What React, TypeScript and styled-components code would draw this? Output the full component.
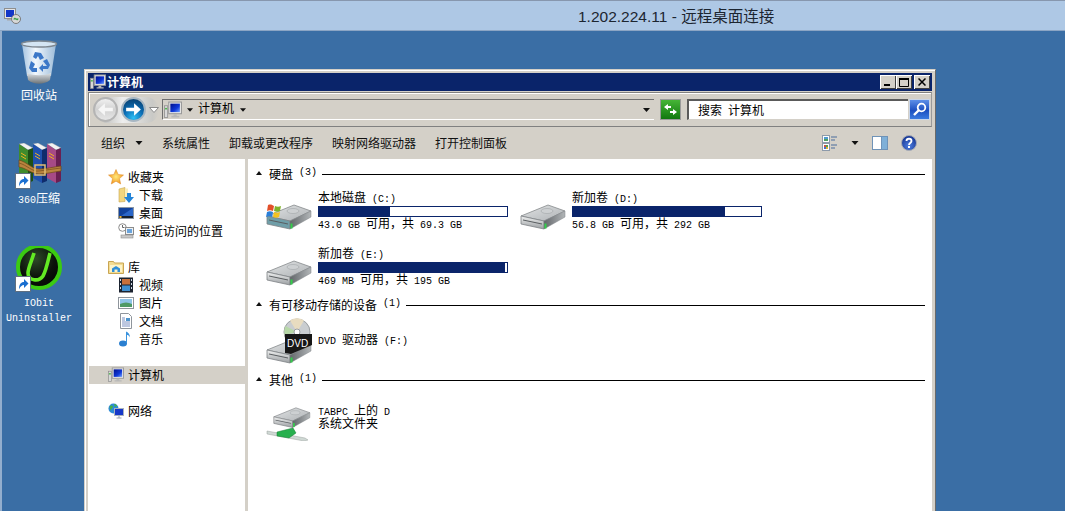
import React from 'react'
import styled, { createGlobalStyle } from 'styled-components'

const GlobalStyle = createGlobalStyle`
  html, body { margin: 0; padding: 0; height: 511px; overflow: hidden; background: #3a6ea5; }
  body { font-family: "Noto Sans CJK SC", "Liberation Sans", sans-serif; font-size: 12px; color: #000; }
  * { box-sizing: border-box; }
`

const Page = styled.div`
  height: 511px;
  display: flex;
  flex-direction: column;
  overflow: hidden;
`

const RemoteBar = styled.header`
  height: 31px;
  flex: none;
  display: flex;
  align-items: center;
  padding-left: 4px;
  background: #aec8e5;
  border-top: 1px solid #8797ae;
  border-bottom: 1px solid #8ba5c4;
`

const RemoteTitle = styled.div`
  margin-left: 557px;
  margin-top: -2px;
  font-family: "Liberation Sans", "Noto Sans CJK SC", sans-serif;
  font-size: 15.5px;
  color: #1c2530;
  white-space: nowrap;
`

const Desktop = styled.main`
  position: relative;
  flex: 1;
  min-height: 0;
  background: #3a6ea5;
  border-left: 2px solid #93aecd;
`

const IconColumn = styled.div`
  width: 74px;
  padding-top: 9px;
  display: grid;
  grid-auto-rows: 103px;
`

const Tile = styled.div`
  display: flex;
  flex-direction: column;
  align-items: center;
`

const IconSlot = styled.div`
  position: relative;
  width: 48px;
  height: 48px;
`

const ShortcutBadge = styled.span`
  position: absolute;
  left: 0;
  bottom: 2px;
  width: 16px;
  height: 16px;
  display: block;
`

const TileLabel = styled.div`
  color: #fff;
  text-align: center;
  line-height: 13px;
  white-space: nowrap;
`

const Mono = styled.span`
  font-family: "Liberation Mono", monospace;
  font-size: 10px;
  line-height: 1;
  white-space: pre;
`

const ExplorerWindow = styled.section`
  position: absolute;
  left: 82px;
  top: 38px;
  width: 852px;
  height: 445px;
  padding: 3px 3px 0 3px;
  display: flex;
  flex-direction: column;
  background: #d4d0c8;
  border-top: 1px solid #d4d0c8;
  border-left: 1px solid #d4d0c8;
  border-right: 1px solid #6a6a6a;
  box-shadow: inset 1px 1px 0 #fff;
`

const TitleBar = styled.div`
  height: 18px;
  flex: none;
  display: flex;
  align-items: center;
  padding: 0 2px;
  background: #0a246a;
  color: #fff;
  font-weight: 700;
`

const TitleText = styled.span`
  flex: 1;
  margin-left: 1px;
  line-height: 18px;
`

const CaptionButton = styled.button<{ $gap?: number }>`
  width: 16px;
  height: 14px;
  padding: 0;
  margin-left: ${p => p.$gap ?? 0}px;
  border: 0;
  display: flex;
  align-items: center;
  justify-content: center;
  background: #d4d0c8;
  box-shadow: inset 1px 1px 0 #fff, inset -1px -1px 0 #404040;
`

const NavFrame = styled.div`
  height: 35px;
  margin-top: 1px;
  flex: none;
  display: flex;
  align-items: center;
  padding: 0 1px 0 4px;
  border: 1px solid #808080;
  border-right-color: #9a9a9a;
  box-shadow: inset 1px 1px 0 #fff;
`

const NavCapsule = styled.div`
  width: 66px;
  height: 26px;
  flex: none;
  display: flex;
  align-items: center;
  gap: 3px;
  margin-right: 3px;
  border-radius: 13px;
  background: linear-gradient(90deg, transparent 10px, #c4c4c2 12px, #eeeeee 45%, #c9c9c6 90%, transparent);
`

const RoundButton = styled.span<{ $active?: boolean }>`
  width: 25px;
  height: 25px;
  border-radius: 50%;
  flex: none;
  display: flex;
  align-items: center;
  justify-content: center;
  border: 2px solid ${p => (p.$active ? '#a7b6c2' : '#b4b4b4')};
  background: ${p =>
    p.$active
      ? 'radial-gradient(circle at 50% 90%, #2fc0f5 0%, #0b6cb4 45%, #063560 100%)'
      : 'linear-gradient(#f0f0f0, #d2d2d2 50%, #e6e6e6)'};
`

const HistoryChevron = styled.span`
  display: flex;
`

const AddressBox = styled.div`
  flex: 1;
  height: 21px;
  display: flex;
  align-items: center;
  padding: 0 4px 0 1px;
  border-top: 1px solid #6f6f6f;
  border-left: 1px solid #6f6f6f;
  border-bottom: 1px solid #fff;
`

const AddressCaret = styled.span`
  margin-left: 5px;
  display: flex;
`

const AddressLabel = styled.span`
  margin: 0 6px 3px 5px;
  line-height: 16px;
`

const Spacer = styled.span`
  flex: 1;
`

const RefreshButton = styled.span`
  width: 21px;
  height: 21px;
  margin: 0 6px;
  flex: none;
  display: flex;
  align-items: center;
  justify-content: center;
  background: linear-gradient(#46b536, #11780f);
  border: 1px solid #e7e4dd;
  outline: 1px solid #9a9a9a;
  outline-offset: -1px;
`

const SearchBox = styled.div`
  width: 221px;
  height: 21px;
  flex: none;
  margin-right: 1px;
  padding-left: 9px;
  line-height: 17px;
  background: #fff;
  border-top: 2px solid #5a5a5a;
  border-left: 2px solid #5a5a5a;
  border-bottom: 1px solid #d4d0c8;
`

const SearchButton = styled.span`
  width: 21px;
  height: 21px;
  flex: none;
  display: flex;
  align-items: center;
  justify-content: center;
  background: linear-gradient(#5d8fe8, #1c4fc0 55%, #3a7ae0);
  border: 1px solid #c9d5e8;
`

const Toolbar = styled.div`
  height: 32px;
  flex: none;
  display: flex;
  align-items: center;
  gap: 19px;
  padding: 0 15px 0 13px;
`

const ToolItem = styled.span`
  display: flex;
  align-items: center;
  gap: 10px;
  line-height: 18px;
  color: #111;
`

const ToolIcons = styled.div`
  margin-left: auto;
  display: flex;
  align-items: center;
  gap: 13px;
`

const Panes = styled.div`
  flex: 1;
  min-height: 0;
  display: grid;
  grid-template-columns: 157px 3px 1fr;
  background: #fff;
`

const Gutter = styled.div`
  background: #d4d0c8;
`

const NavPane = styled.nav`
  padding: 9px 0 0 1px;
  display: grid;
  grid-auto-rows: 18px;
`

const NavRow = styled.div<{ $child?: boolean; $selected?: boolean }>`
  display: flex;
  align-items: center;
  gap: ${p => (p.$child ? 5 : 4)}px;
  padding-left: ${p => (p.$child ? 29 : 19)}px;
  line-height: 18px;
  background: ${p => (p.$selected ? '#d4d0c8' : 'transparent')};
`

const ContentPane = styled.div`
  padding: 6px 7px 0 8px;
`

const GroupHeader = styled.div<{ $top: number }>`
  display: flex;
  align-items: center;
  height: 16px;
  margin-top: ${p => p.$top}px;
`

const Collapse = styled.span`
  width: 0;
  height: 0;
  margin-right: 7px;
  border-left: 3.5px solid transparent;
  border-right: 3.5px solid transparent;
  border-bottom: 4px solid #111;
`

const GroupRule = styled.span`
  flex: 1;
  height: 1px;
  margin: 3px 0 0 5px;
  background: #000;
`

const TileGrid = styled.div<{ $top: number }>`
  display: grid;
  grid-template-columns: 254px 254px;
  row-gap: 12px;
  margin: ${p => p.$top}px 0 0 10px;
`

const Drive = styled.div`
  display: flex;
  align-items: center;
  gap: 6px;
  height: 44px;
`

const DriveIcon = styled.span<{ $lift?: number }>`
  width: 46px;
  height: 48px;
  flex: none;
  display: flex;
  align-items: flex-end;
  justify-content: center;
  padding-bottom: ${p => p.$lift ?? 0}px;
`

const DriveInfo = styled.div`
  width: 190px;
  margin-bottom: 1px;
`

const DriveLine = styled.div`
  height: 13px;
  line-height: 11px;
  white-space: nowrap;
`

const DriveBar = styled.div`
  height: 11px;
  margin-top: 2px;
  border: 1px solid #0a246a;
  background: #fff;
`

const DriveFill = styled.div`
  height: 100%;
  background: #0a246a;
`

const ComputerIcon = ({ size = 16 }: { size?: number }) => (
  <svg width={size} height={size} viewBox="0 0 17 16">
    <defs>
      <linearGradient id="scr" x1="0" y1="0" x2="1" y2="1">
        <stop offset="0" stopColor="#00108c" />
        <stop offset="0.6" stopColor="#1038d8" />
        <stop offset="1" stopColor="#6fa0ff" />
      </linearGradient>
    </defs>
    <rect x="0.5" y="4" width="3" height="11" fill="#d9d9d9" stroke="#8a8a8a" strokeWidth="0.7" />
    <rect x="1" y="6" width="2" height="1.5" fill="#4fb84f" />
    <rect x="4.5" y="0.5" width="12" height="11" fill="#e8e8e8" stroke="#9a9a9a" />
    <rect x="6" y="2" width="9" height="8" fill="url(#scr)" />
    <path d="M9 12h3v1.5h2.5V15H7v-1.5h2z" fill="#b8b8b8" />
  </svg>
)

const RemoteGlyph = () => (
  <svg width="17" height="17" viewBox="0 0 17 17">
    <rect x="0.5" y="1.5" width="11" height="10" fill="#e4e4e4" stroke="#8f8f8f" />
    <rect x="2" y="3" width="8" height="7" fill="#1236c8" />
    <path d="M3 12h7v1.500H3z" fill="#a8a8a8" />
    <circle cx="12" cy="12" r="4.500" fill="#d8d8d8" stroke="#7a7a7a" />
    <path d="M9.500 12h2l-1-1.200M14.500 12h-2l1 1.200" fill="none" stroke="#2c9a3a" strokeWidth="1.200" />
  </svg>
)

const TriangleDown = ({ color = '#111', w = 7 }: { color?: string; w?: number }) => (
  <svg width={w} height="4" viewBox="0 0 7 4">
    <path d="M0 0h7L3.5 4z" fill={color} />
  </svg>
)

const ShortcutArrow = () => (
  <svg width="16" height="16" viewBox="0 0 16 16">
    <rect x="0.5" y="0.5" width="15" height="15" fill="#fff" stroke="#5f6f80" />
    <path d="M4 13.500c0-5.500 2-7.500 5-7.500V3L13.500 7.500 9 12V9c-2 0-4 1.500-5 4.500z" fill="#1a6fd0" />
  </svg>
)

const RecycleBin = () => (
  <svg width="48" height="48" viewBox="0 0 48 48">
    <defs>
      <linearGradient id="bin" x1="0" y1="0" x2="1" y2="0">
        <stop offset="0" stopColor="#a6c4e0" />
        <stop offset="0.4" stopColor="#f2f8fd" />
        <stop offset="1" stopColor="#9dbcd9" />
      </linearGradient>
      <linearGradient id="binBase" x1="0" y1="0" x2="0" y2="1">
        <stop offset="0" stopColor="#dfe3e6" />
        <stop offset="1" stopColor="#6b7277" />
      </linearGradient>
    </defs>
    <path d="M7 4l5 32h24l5-32z" fill="url(#bin)" />
    <path d="M12 33c7 3 17 3 24 0l-1 7c-6 5-16 5-22 0z" fill="url(#binBase)" />
    <ellipse cx="24" cy="4" rx="17.5" ry="3" fill="#d4e5f3" stroke="#7d8790" strokeWidth="1.400" />
    <g fill="#3c78c8">
      <path d="M20 12l6 1 3 5-4 2-2-4-2 3-3-2z" />
      <path d="M28 21l4-2 3 6-2 4h-5v3l-4-4 4-4v2h4z" />
      <path d="M16 21l4 3-2 4h4v4h-5l-3-4z" />
    </g>
  </svg>
)

const Book = ({ x, color, dark }: { x: number; color: string; dark: string }) => (
  <g>
    <path d={`M${x} 1l5-1 9 5-5 2z`} fill="#f2f2f2" stroke="#9c9c9c" strokeWidth="0.4" />
    <path d={`M${x} 1l9 6v33l-9-5z`} fill={color} />
    <path d={`M${x + 9} 7l5-2v33l-5 2z`} fill={dark} />
    <path d={`M${x + 2} 10l5 3M${x + 2} 13l5 3`} stroke="#f2b21e" strokeWidth="1" />
  </g>
)

const ArchiveBooks = () => (
  <svg width="48" height="48" viewBox="0 0 48 48">
    <Book x={32} color="#a64a86" dark="#6a1f52" />
    <Book x={18} color="#1f50ac" dark="#102c6c" />
    <Book x={4} color="#3f8b2d" dark="#1e5016" />
    <path d="M4 17c8 2 13 9 20 9s14-2 22-3v5c-8 1-15 3-22 3S11 25 4 24z" fill="#b9843e" stroke="#6d4619" strokeWidth="0.7" />
    <path d="M4 20c8 2 13 9 20 8s14-2 22-3" fill="none" stroke="#7c521f" strokeWidth="0.8" />
    <rect x="20" y="22" width="10" height="10" fill="none" stroke="#e0bc72" strokeWidth="1.500" />
  </svg>
)

const UninstallerLogo = () => (
  <svg width="48" height="48" viewBox="0 0 48 48">
    <defs>
      <radialGradient id="uBg" cx="0.42" cy="0.3" r="0.75">
        <stop offset="0" stopColor="#2e4a28" />
        <stop offset="0.6" stopColor="#0b120a" />
        <stop offset="1" stopColor="#040604" />
      </radialGradient>
    </defs>
    <circle cx="24" cy="21" r="21" fill="url(#uBg)" stroke="#3bcb12" strokeWidth="4" />
    <path d="M19 7c-2 7-6 15-6 20 0 8 11 9 15 3 3-5 5-15 7-23" fill="none" stroke="#63ea23" strokeWidth="3.600" />
  </svg>
)

const Star = () => (
  <svg width="16" height="16" viewBox="0 0 16 16">
    <defs>
      <radialGradient id="star" cx="0.5" cy="0.5" r="0.6">
        <stop offset="0" stopColor="#ffe87a" />
        <stop offset="1" stopColor="#f08a12" />
      </radialGradient>
    </defs>
    <path d="M8 0.5l2.2 5 5.3.5-4 3.6 1.2 5.4L8 12.2 3.3 15l1.2-5.400-4-3.600 5.300-.5z" fill="url(#star)" stroke="#dd8a2a" strokeWidth="0.5" />
  </svg>
)

const DownloadFolder = () => (
  <svg width="16" height="16" viewBox="0 0 16 16">
    <path d="M1 2l6-1.500v14L1 15z" fill="#f2d67e" stroke="#c7a650" strokeWidth="0.6" />
    <path d="M7 1.500h3v10H7z" fill="#fbeeb8" />
    <path d="M9 6h4v4h3l-5 6-5-6h3z" fill="#2384d8" />
  </svg>
)

const DesktopGlyph = () => (
  <svg width="16" height="16" viewBox="0 0 16 16">
    <rect x="0.500" y="2.500" width="15" height="11" fill="#2a66c8" stroke="#8b97a6" />
    <path d="M1 3h14L3 11H1z" fill="#11429c" />
    <rect x="1" y="11" width="14" height="2" fill="#17202c" />
    <rect x="1.500" y="11" width="2" height="2" fill="#e8b23a" />
  </svg>
)

const RecentGlyph = () => (
  <svg width="16" height="16" viewBox="0 0 16 16">
    <circle cx="4.500" cy="4.500" r="3.800" fill="#fff" stroke="#8c8c8c" />
    <path d="M4.500 2v2.500h2" stroke="#666" fill="none" />
    <rect x="7.500" y="4.500" width="8" height="7" fill="#eef1f4" stroke="#8c8c8c" />
    <rect x="9" y="6" width="5" height="4" fill="#6aa4dc" />
    <rect x="3" y="12" width="12" height="3" fill="#c9c9c9" stroke="#8c8c8c" strokeWidth="0.6" />
  </svg>
)

const LibraryFolder = () => (
  <svg width="16" height="16" viewBox="0 0 16 16">
    <path d="M0.500 2.500h5l1 1.500h9v10.500H.5z" fill="#f3dc93" stroke="#c9a552" />
    <path d="M2 6h12v7H2z" fill="#fdf3c8" />
    <path d="M4 13V9.500L8 7l4 2.500V13z" fill="#2f8ed8" />
    <rect x="6.500" y="10.500" width="3" height="2.500" fill="#fdf3c8" />
  </svg>
)

const FilmGlyph = () => (
  <svg width="16" height="16" viewBox="0 0 16 16">
    <rect x="1" y="0.500" width="14" height="15" fill="#1b2330" />
    <rect x="4" y="2" width="8" height="5.500" fill="#c8703a" />
    <rect x="4" y="8.500" width="8" height="5.500" fill="#3f8fd0" />
    <path d="M2 2h1v2H2zM2 6h1v2H2zM2 10h1v2H2zM13 2h1v2h-1zM13 6h1v2h-1zM13 10h1v2h-1z" fill="#cfd8e4" />
  </svg>
)

const PictureGlyph = () => (
  <svg width="16" height="16" viewBox="0 0 16 16">
    <rect x="0.500" y="2.500" width="15" height="11" fill="#fff" stroke="#8f959c" />
    <rect x="2" y="4" width="12" height="8" fill="#8fc4e8" />
    <path d="M2 9c4-2 8-2 12 0v3H2z" fill="#4f9a66" />
  </svg>
)

const DocGlyph = () => (
  <svg width="16" height="16" viewBox="0 0 16 16">
    <path d="M2.500 .5h8l3 3v12h-11z" fill="#fff" stroke="#8f959c" />
    <path d="M4 5h3M4 7h3M4 9h8M4 11h8M4 13h8" stroke="#7b8fc0" />
    <rect x="8" y="5" width="4" height="3" fill="#4d94cc" />
  </svg>
)

const MusicGlyph = () => (
  <svg width="16" height="16" viewBox="0 0 16 16">
    <ellipse cx="5" cy="12.500" rx="4" ry="3" fill="#2a7fd0" />
    <path d="M8 12V.5c2 1 4 2.500 4 6-1-2-2-2.500-3-2.500v8z" fill="#3a93de" />
  </svg>
)

const NetworkGlyph = () => (
  <svg width="16" height="16" viewBox="0 0 16 16">
    <circle cx="5.500" cy="5.500" r="5" fill="#2c8ad8" />
    <path d="M2 3c2-1 3 0 3 1s-2 1-2 3-2-2-1-4zM6 1c2 0 3 1 3 2L7 4z" fill="#44b048" />
    <rect x="6.500" y="5.500" width="9" height="7" fill="#1638c8" stroke="#a9b2bd" />
    <path d="M10.500 13h1v1.500h2v1h-5v-1h2z" fill="#9aa2aa" />
  </svg>
)

const DriveBody = ({ tint = false }: { tint?: boolean }) => (
  <g strokeLinejoin="round">
    <defs>
      <linearGradient id="dTop" x1="0" y1="0" x2="1" y2="1">
        <stop offset="0" stopColor="#e2e4e5" />
        <stop offset="1" stopColor="#aeb2b5" />
      </linearGradient>
      <linearGradient id="dSide" x1="0" y1="0" x2="1" y2="0">
        <stop offset="0" stopColor="#62666a" />
        <stop offset="1" stopColor="#b2b6b8" />
      </linearGradient>
      <linearGradient id="dFront" x1="0" y1="0" x2="0" y2="1">
        <stop offset="0" stopColor="#f0f1f1" />
        <stop offset="1" stopColor="#9a9ea1" />
      </linearGradient>
    </defs>
    <path d="M1 12L28 1l17 6-21 10z" fill="url(#dTop)" stroke="#85898c" strokeWidth="0.8" />
    <ellipse cx="27" cy="7" rx="6" ry="2.500" fill="#cdd0d2" stroke="#9a9ea1" strokeWidth="0.5" />
    <path d="M1 12l23 5v8L1 20z" fill={tint ? '#6f9ea8' : 'url(#dFront)'} stroke="#7f8386" strokeWidth="0.8" />
    <path d="M3 15.500l19 4v1L3 16.500z" fill="#5a5e61" />
    <path d="M24 17l21-10v6L24 25z" fill="url(#dSide)" stroke="#7f8386" strokeWidth="0.5" />
    <rect x="24.500" y="19.500" width="2" height="5" fill="#32d04a" />
  </g>
)

const HardDrive = () => (
  <svg width="46" height="26" viewBox="0 0 46 26">
    <DriveBody />
  </svg>
)

const SystemDrive = () => (
  <svg width="46" height="26" viewBox="0 0 46 26">
    <DriveBody tint />
    <path d="M2 1c3-1 4 0 6 1l-1 5c-2-1-4-1-6 0z" fill="#e2502a" />
    <path d="M9 2c2 1 4 1 6 0l-1 5c-2 1-4 1-6 0z" fill="#7fb32a" />
    <path d="M1 8c2-1 4-1 6 0l-1 5c-2-1-4-1-6 0z" fill="#2a7fd8" />
    <path d="M8 8c2 1 4 1 6 0l-1 5c-2 1-4 1-6 0z" fill="#f2c21f" />
  </svg>
)

const DvdDrive = () => (
  <svg width="46" height="46" viewBox="0 0 46 46">
    <circle cx="31" cy="14" r="13" fill="#c9cdd0" stroke="#9a9ea1" />
    <path d="M31 14L24 2.500a13 13 0 0 1 14 0z" fill="#e8dcc0" />
    <path d="M31 14L18.500 17a13 13 0 0 1 1-9z" fill="#b7d8a8" />
    <circle cx="31" cy="14" r="3" fill="#fff" stroke="#9a9ea1" />
    <g transform="translate(0 20)">
      <DriveBody />
    </g>
    <path d="M19 16h27v11l-21 9-6-1z" fill="#171717" />
    <text x="21" y="29" fontFamily="Liberation Sans, sans-serif" fontSize="10" fill="#fff">DVD</text>
  </svg>
)

const NetDrive = () => (
  <svg width="46" height="34" viewBox="0 0 46 34">
    <g transform="translate(7 0) scale(0.82)">
      <DriveBody />
    </g>
    <path d="M1 24l38 7 3 2-4 1L1 27z" fill="#cfd8d4" stroke="#9aa39e" strokeWidth="0.5" />
    <path d="M11 25l16-4 3 5-7 5-12-2z" fill="#27b04e" stroke="#147a30" strokeWidth="0.5" />
  </svg>
)

const ViewsGlyph = () => (
  <svg width="16" height="16" viewBox="0 0 16 16">
    <rect x="0.500" y="0.500" width="7" height="7" fill="#fff" stroke="#8d9aaa" />
    <rect x="2" y="2" width="4" height="2" fill="#4f9ad0" />
    <rect x="2" y="4" width="4" height="2" fill="#4fa060" />
    <rect x="0.500" y="8.500" width="7" height="7" fill="#fff" stroke="#8d9aaa" />
    <rect x="2" y="10" width="2" height="2" fill="#d05040" />
    <rect x="4" y="10" width="2" height="2" fill="#50a050" />
    <rect x="2" y="12" width="2" height="2" fill="#4070d0" />
    <rect x="4" y="12" width="2" height="2" fill="#e0b030" />
    <path d="M9 2h6M9 5h4M9 10h6M9 13h4" stroke="#4a6d9c" />
  </svg>
)

const PaneGlyph = () => (
  <svg width="16" height="14" viewBox="0 0 16 14">
    <rect x="0.500" y="0.500" width="15" height="13" fill="#fff" stroke="#6f93b8" />
    <rect x="10" y="1" width="5" height="12" fill="#7fb0d8" />
    <path d="M9.500 1v12" stroke="#6f93b8" />
  </svg>
)

const HelpGlyph = () => (
  <svg width="16" height="16" viewBox="0 0 16 16">
    <defs>
      <radialGradient id="help" cx="0.5" cy="0.7" r="0.7">
        <stop offset="0" stopColor="#4e7ee0" />
        <stop offset="1" stopColor="#12308e" />
      </radialGradient>
    </defs>
    <circle cx="8" cy="8" r="7.500" fill="url(#help)" stroke="#a8acb4" />
    <path d="M5.500 6c0-3 5-3 5 0 0 2-2.500 2-2.500 4" fill="none" stroke="#fff" strokeWidth="1.800" />
    <rect x="7" y="11" width="2" height="2" fill="#fff" />
  </svg>
)

const ArrowGlyph = ({ color, flip = false }: { color: string; flip?: boolean }) => (
  <svg width="17" height="15" viewBox="0 0 15 13">
    <path d={flip ? 'M14 5v3H7v4L1 6.500 7 1v4z' : 'M1 5v3h7v4l6-5.500L8 1v4z'} fill={color} />
  </svg>
)

const disks = [
  { name: '本地磁盘', letter: ' (C:)', free: '43.0 GB ', total: ' 69.3 GB', used: 38, icon: <SystemDrive /> },
  { name: '新加卷', letter: ' (D:)', free: '56.8 GB ', total: ' 292 GB', used: 81, icon: <HardDrive /> },
  { name: '新加卷', letter: ' (E:)', free: '469 MB ', total: ' 195 GB', used: 99.2, icon: <HardDrive /> },
]

export default function App() {
  return (
    <Page>
      <GlobalStyle />
      <RemoteBar>
        <RemoteGlyph />
        <RemoteTitle>1.202.224.11 - 远程桌面连接</RemoteTitle>
      </RemoteBar>
      <Desktop>
        <IconColumn>
          <Tile>
            <IconSlot><RecycleBin /></IconSlot>
            <TileLabel>回收站</TileLabel>
          </Tile>
          <Tile>
            <IconSlot>
              <ArchiveBooks />
              <ShortcutBadge><ShortcutArrow /></ShortcutBadge>
            </IconSlot>
            <TileLabel><Mono>360</Mono>压缩</TileLabel>
          </Tile>
          <Tile>
            <IconSlot>
              <UninstallerLogo />
              <ShortcutBadge><ShortcutArrow /></ShortcutBadge>
            </IconSlot>
            <TileLabel><Mono>IObit</Mono><br /><Mono>Uninstaller</Mono></TileLabel>
          </Tile>
        </IconColumn>

        <ExplorerWindow>
          <TitleBar>
            <ComputerIcon />
            <TitleText>计算机</TitleText>
            <CaptionButton aria-label="最小化">
              <svg width="8" height="8" viewBox="0 0 8 8"><rect x="0" y="6" width="6" height="2" fill="#000" /></svg>
            </CaptionButton>
            <CaptionButton aria-label="最大化">
              <svg width="10" height="9" viewBox="0 0 10 9"><path d="M.5 1.500h9v7h-9z" fill="none" stroke="#000" /><rect width="10" height="2" fill="#000" /></svg>
            </CaptionButton>
            <CaptionButton aria-label="关闭" $gap={2}>
              <svg width="8" height="8" viewBox="0 0 8 8"><path d="M.5.5l7 7M7.500.5l-7 7" stroke="#000" strokeWidth="1.500" /></svg>
            </CaptionButton>
          </TitleBar>

          <NavFrame>
            <NavCapsule>
              <RoundButton><ArrowGlyph color="#f6f6f6" flip /></RoundButton>
              <RoundButton $active><ArrowGlyph color="#fff" /></RoundButton>
              <HistoryChevron>
                <svg width="10" height="6" viewBox="0 0 10 6"><path d="M.5.5h9L5 5.500z" fill="#fff" stroke="#8a8a8a" /></svg>
              </HistoryChevron>
            </NavCapsule>
            <AddressBox>
              <ComputerIcon size={18} />
              <AddressCaret><TriangleDown w={6} /></AddressCaret>
              <AddressLabel>计算机</AddressLabel>
              <TriangleDown w={6} />
              <Spacer />
              <TriangleDown />
            </AddressBox>
            <RefreshButton>
              <svg width="15" height="13" viewBox="0 0 15 13">
                <path d="M1 4l4-3v2h3v2H5v2zM14 9l-4 3v-2H7V8h3V6z" fill="#fff" />
              </svg>
            </RefreshButton>
            <SearchBox>搜索<Mono> </Mono>计算机</SearchBox>
            <SearchButton>
              <svg width="15" height="15" viewBox="0 0 15 15">
                <circle cx="9.500" cy="5.500" r="3.800" fill="none" stroke="#fff" strokeWidth="1.800" />
                <path d="M7 8l-5 5" stroke="#fff" strokeWidth="2.400" />
              </svg>
            </SearchButton>
          </NavFrame>

          <Toolbar>
            <ToolItem>组织<TriangleDown w={8} /></ToolItem>
            <ToolItem>系统属性</ToolItem>
            <ToolItem>卸载或更改程序</ToolItem>
            <ToolItem>映射网络驱动器</ToolItem>
            <ToolItem>打开控制面板</ToolItem>
            <ToolIcons>
              <ViewsGlyph />
              <TriangleDown w={8} />
              <PaneGlyph />
              <HelpGlyph />
            </ToolIcons>
          </Toolbar>

          <Panes>
            <NavPane>
              <NavRow><Star />收藏夹</NavRow>
              <NavRow $child><DownloadFolder />下载</NavRow>
              <NavRow $child><DesktopGlyph />桌面</NavRow>
              <NavRow $child><RecentGlyph />最近访问的位置</NavRow>
              <NavRow />
              <NavRow><LibraryFolder />库</NavRow>
              <NavRow $child><FilmGlyph />视频</NavRow>
              <NavRow $child><PictureGlyph />图片</NavRow>
              <NavRow $child><DocGlyph />文档</NavRow>
              <NavRow $child><MusicGlyph />音乐</NavRow>
              <NavRow />
              <NavRow $selected><ComputerIcon />计算机</NavRow>
              <NavRow />
              <NavRow><NetworkGlyph />网络</NavRow>
            </NavPane>
            <Gutter />
            <ContentPane>
              <GroupHeader $top={0}>
                <Collapse />硬盘<Mono> (3)</Mono><GroupRule />
              </GroupHeader>
              <TileGrid $top={8}>
                {disks.map(d => (
                  <Drive key={d.letter}>
                    <DriveIcon $lift={5}>{d.icon}</DriveIcon>
                    <DriveInfo>
                      <DriveLine>{d.name}<Mono>{d.letter}</Mono></DriveLine>
                      <DriveBar>
                        <DriveFill style={{ width: `${d.used}%` }} />
                      </DriveBar>
                      <DriveLine><Mono>{d.free}</Mono>{'可用\uFF0C共'}<Mono>{d.total}</Mono></DriveLine>
                    </DriveInfo>
                  </Drive>
                ))}
              </TileGrid>
              <GroupHeader $top={7}>
                <Collapse />有可移动存储的设备<Mono> (1)</Mono><GroupRule />
              </GroupHeader>
              <TileGrid $top={6}>
                <Drive>
                  <DriveIcon><DvdDrive /></DriveIcon>
                  <DriveInfo><DriveLine><Mono>DVD </Mono>驱动器<Mono> (F:)</Mono></DriveLine></DriveInfo>
                </Drive>
              </TileGrid>
              <GroupHeader $top={9}>
                <Collapse />其他<Mono> (1)</Mono><GroupRule />
              </GroupHeader>
              <TileGrid $top={8}>
                <Drive>
                  <DriveIcon><NetDrive /></DriveIcon>
                  <DriveInfo>
                    <DriveLine>
                      <Mono>TABPC </Mono>上的<Mono> D</Mono>
                    </DriveLine>
                    <DriveLine>系统文件夹</DriveLine>
                  </DriveInfo>
                </Drive>
              </TileGrid>
            </ContentPane>
          </Panes>
        </ExplorerWindow>
      </Desktop>
    </Page>
  )
}
